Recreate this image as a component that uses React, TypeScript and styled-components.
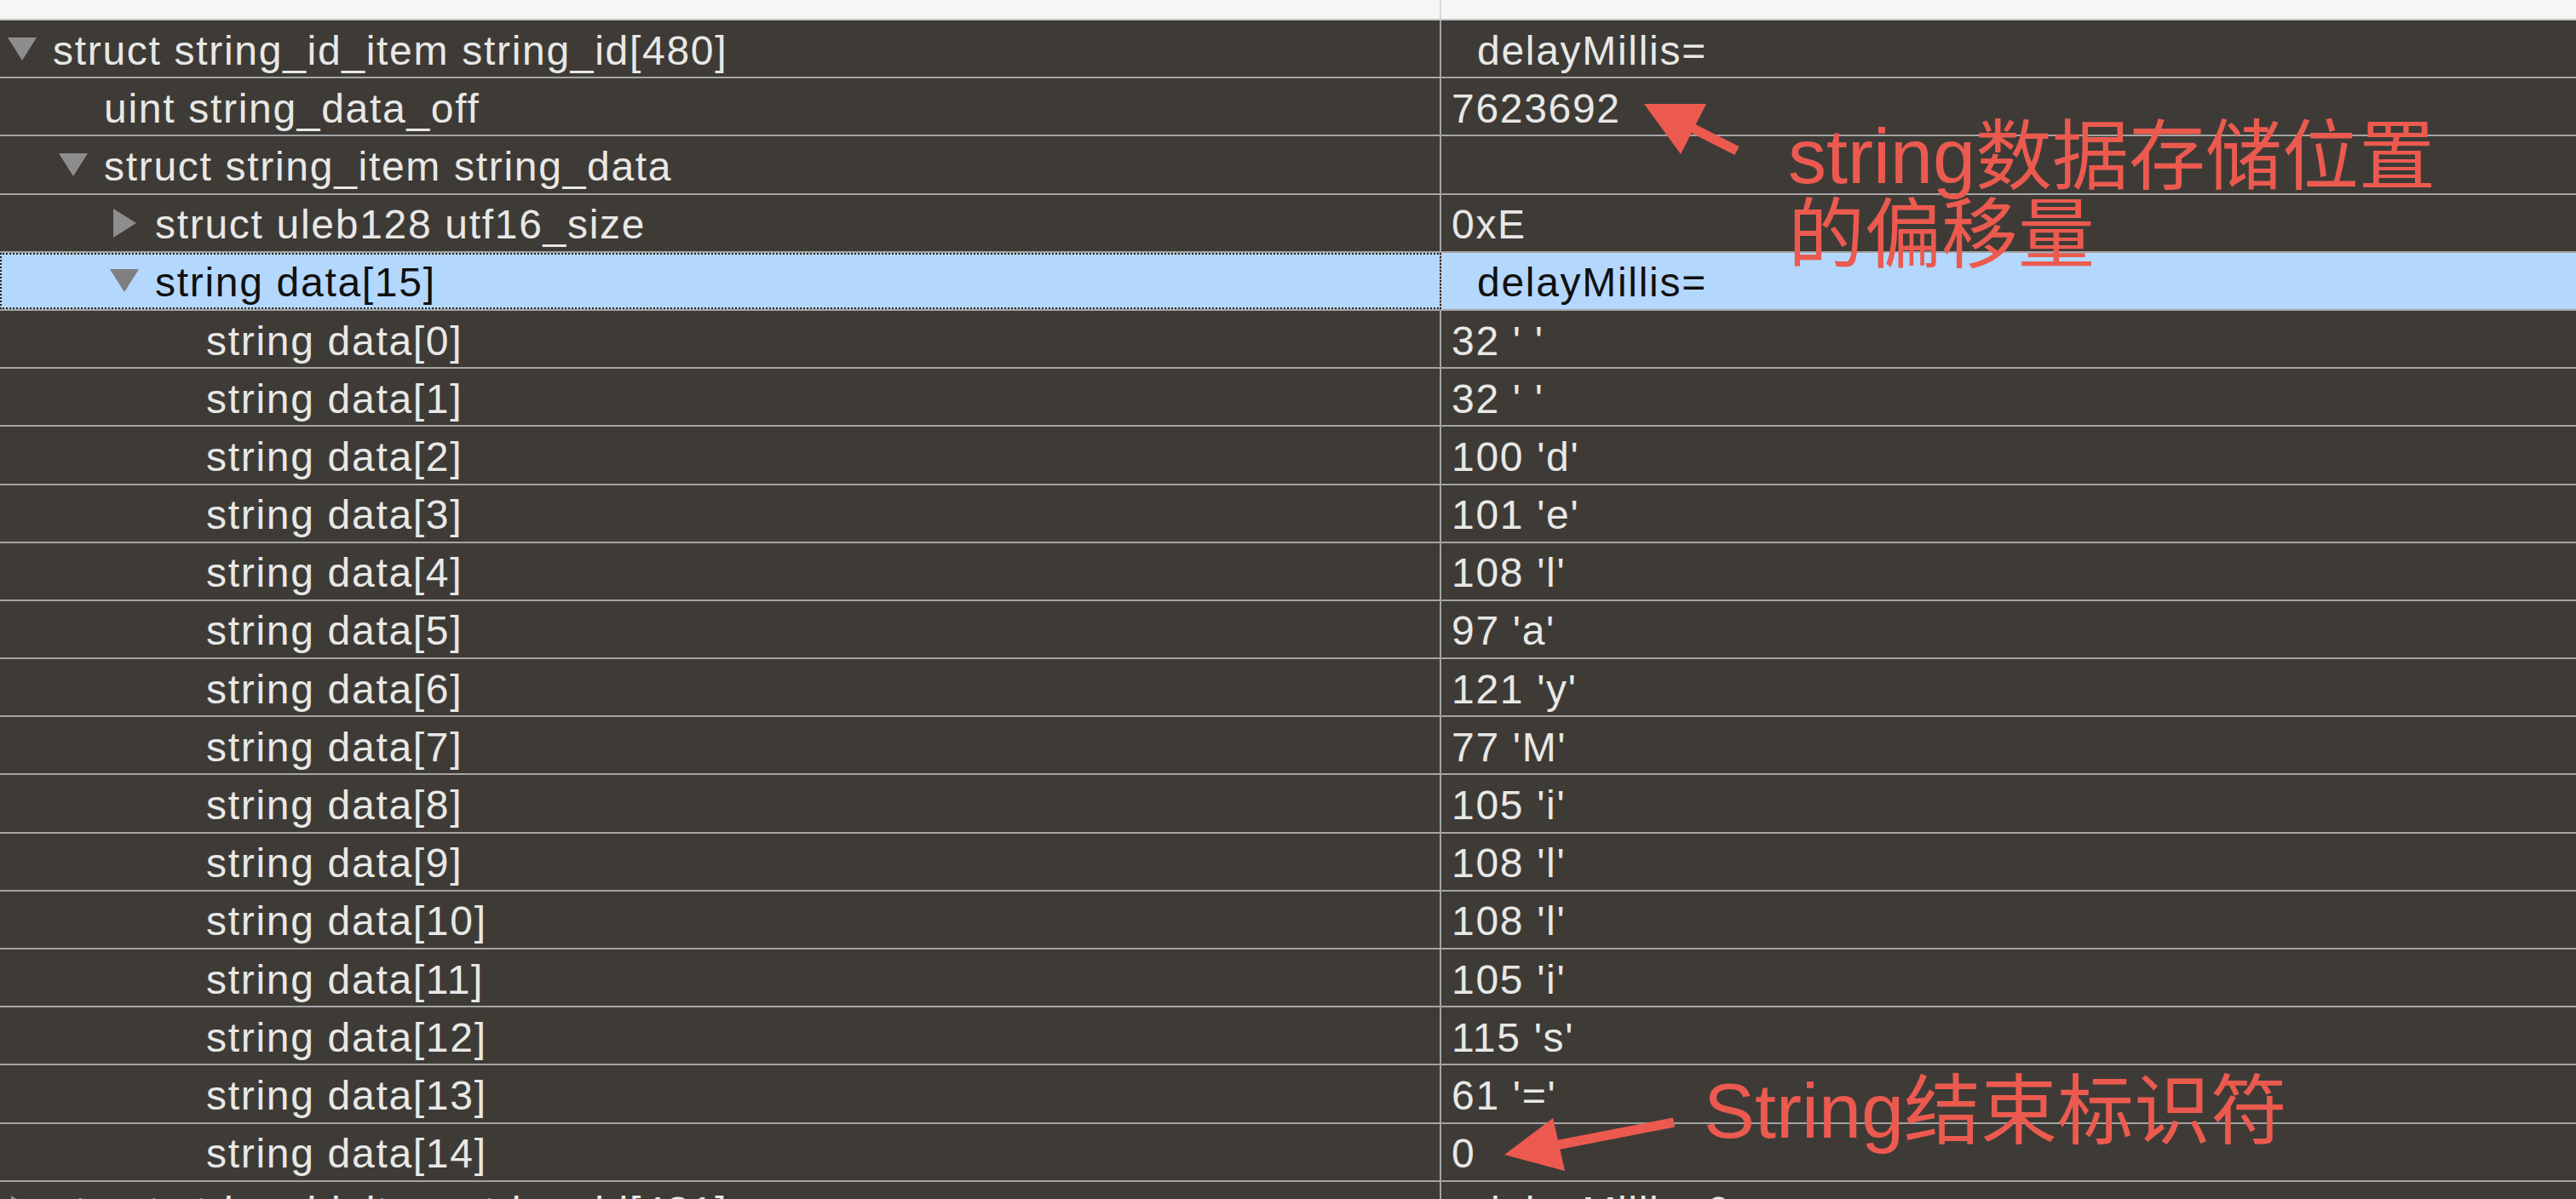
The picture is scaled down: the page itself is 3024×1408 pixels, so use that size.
import React from 'react'
import styled, { createGlobalStyle, css } from 'styled-components'

const GlobalStyle = createGlobalStyle`
  html, body {
    margin: 0;
    padding: 0;
    height: 100%;
    overflow: hidden;
    background: #3e3b37;
  }

  body {
    font-family: "Liberation Sans", Arial, sans-serif;
  }
`

const NAME_WIDTH = 1692

const Page = styled.div`
  position: relative;
  width: 100%;
  height: 1408px;
  overflow: hidden;
  background: #3e3b37;
`

const Header = styled.div`
  display: grid;
  grid-template-columns: ${NAME_WIDTH}px 1fr;
  height: 22px;
  background: #f6f6f6;
  border-bottom: 2px solid #c6c6c6;
`

const HeaderCell = styled.div<{ $divider?: boolean }>`
  box-sizing: border-box;
  border-right: ${p => (p.$divider ? '2px solid #d8d8d8' : 'none')};
`

const Row = styled.div<{ $selected?: boolean }>`
  display: grid;
  grid-template-columns: ${NAME_WIDTH}px 1fr;
  height: 68.2px;
  box-sizing: border-box;
  border-bottom: 2px solid #a4a4a4;
  background: ${p => (p.$selected ? '#b4d7fe' : '#3e3b37')};
  color: ${p => (p.$selected ? '#101010' : '#e8e8e6')};
  font-size: 48px;
  letter-spacing: 1.7px;
`

const NameCell = styled.div<{ $level: number; $selected?: boolean }>`
  display: flex;
  align-items: center;
  box-sizing: border-box;
  padding-left: ${p => 9 + p.$level * 60}px;
  padding-top: 4px;
  border-right: 2px solid #a4a4a4;
  white-space: pre;
  overflow: hidden;

  ${p =>
    p.$selected &&
    css`
      outline: 2px dotted #2a1f14;
      outline-offset: -2px;
    `}
`

const ToggleSlot = styled.span`
  display: flex;
  align-items: center;
  justify-content: center;
  width: 34px;
  height: 34px;
  margin-right: 19px;
  margin-top: -4px;
  flex: none;
`

const ValueCell = styled.div`
  display: flex;
  align-items: center;
  padding-left: 12px;
  padding-top: 4px;
  white-space: pre;
  overflow: hidden;
`

const Note = styled.div<{ $x: number; $y: number }>`
  position: absolute;
  left: ${p => p.$x}px;
  top: ${p => p.$y}px;
  color: #ec5a4f;
  font-family: "Liberation Sans", "Noto Sans CJK SC", sans-serif;
  font-size: 90px;
  line-height: 92px;
  white-space: nowrap;
`

const ArrowSvg = styled.svg<{ $x: number; $y: number }>`
  position: absolute;
  left: ${p => p.$x}px;
  top: ${p => p.$y}px;
  pointer-events: none;
`

type Toggle = 'open' | 'closed'

interface Item {
  name: string
  value: string
  level: number
  toggle?: Toggle
  selected?: boolean
}

const chars: [number, string][] = [
  [32, ' '],
  [32, ' '],
  [100, 'd'],
  [101, 'e'],
  [108, 'l'],
  [97, 'a'],
  [121, 'y'],
  [77, 'M'],
  [105, 'i'],
  [108, 'l'],
  [108, 'l'],
  [105, 'i'],
  [115, 's'],
  [61, '='],
]

const items: Item[] = [
  { name: 'struct string_id_item string_id[480]', value: '  delayMillis=', level: 0, toggle: 'open' },
  { name: 'uint string_data_off', value: '7623692', level: 1 },
  { name: 'struct string_item string_data', value: '', level: 1, toggle: 'open' },
  { name: 'struct uleb128 utf16_size', value: '0xE', level: 2, toggle: 'closed' },
  { name: 'string data[15]', value: '  delayMillis=', level: 2, toggle: 'open', selected: true },
  ...chars.map(([code, ch], i) => ({
    name: `string data[${i}]`,
    value: `${code} '${ch}'`,
    level: 3,
  })),
  { name: 'string data[14]', value: '0', level: 3 },
  { name: 'struct string_id_item string_id[481]', value: '  delayMillis=0', level: 0, toggle: 'closed' },
]

function Triangle({ toggle, selected }: { toggle: Toggle; selected?: boolean }) {
  const fill = selected ? '#7f7f7f' : '#8d8d8d'
  return toggle === 'open' ? (
    <svg width="34" height="27" viewBox="0 0 34 27">
      <polygon points="0,0 34,0 17,27" fill={fill} />
    </svg>
  ) : (
    <svg width="27" height="34" viewBox="0 0 27 34">
      <polygon points="0,0 27,17 0,34" fill={fill} />
    </svg>
  )
}

function Arrow({
  x,
  y,
  w,
  h,
  head,
  shaft,
}: {
  x: number
  y: number
  w: number
  h: number
  head: string
  shaft: [number, number, number, number]
}) {
  return (
    <ArrowSvg $x={x} $y={y} width={w} height={h} viewBox={`${x} ${y} ${w} ${h}`}>
      <line x1={shaft[0]} y1={shaft[1]} x2={shaft[2]} y2={shaft[3]} stroke="#ec5a4f" strokeWidth="11" />
      <polygon points={head} fill="#ec5a4f" />
    </ArrowSvg>
  )
}

export default function App() {
  return (
    <Page>
      <GlobalStyle />
      <Header>
        <HeaderCell $divider />
        <HeaderCell />
      </Header>

      {items.map((item, i) => (
        <Row key={i} $selected={item.selected}>
          <NameCell $level={item.level} $selected={item.selected}>
            <ToggleSlot>{item.toggle && <Triangle toggle={item.toggle} selected={item.selected} />}</ToggleSlot>
            {item.name}
          </NameCell>
          <ValueCell>{item.value}</ValueCell>
        </Row>
      ))}

      <Arrow
        x={1920}
        y={110}
        w={130}
        h={80}
        head="1930,122 2003,122 1973,181"
        shaft={[1982, 148, 2039, 177]}
      />
      <Note $x={2099} $y={138}>
        string数据存储位置
        <br />
        的偏移量
      </Note>

      <Arrow
        x={1755}
        y={1300}
        w={220}
        h={85}
        head="1766,1356 1823,1313 1837,1375"
        shaft={[1826, 1345, 1965, 1318]}
      />
      <Note $x={2000} $y={1259}>String结束标识符</Note>
    </Page>
  )
}
